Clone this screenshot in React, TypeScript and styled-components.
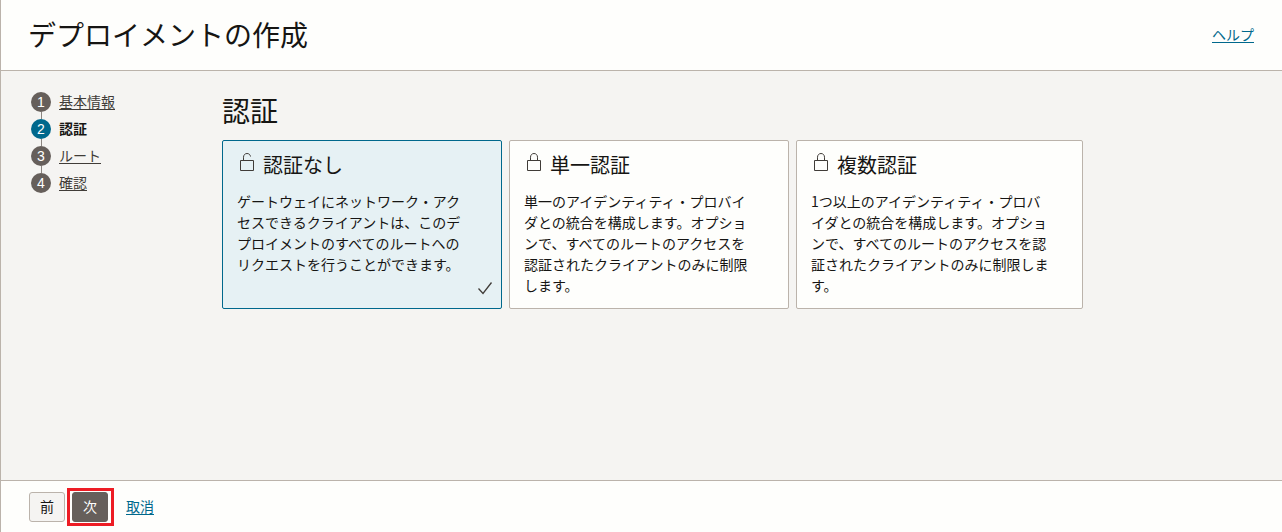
import React, { useState } from "react";
import styled, { createGlobalStyle } from "styled-components";

const GlobalStyle = createGlobalStyle`
  *, *::before, *::after { box-sizing: border-box; }
  body {
    margin: 0;
    background: #f5f4f2;
    color: #161513;
    font-family: "Noto Sans CJK JP", "Noto Sans", sans-serif;
    font-size: 14px;
    line-height: 21px;
  }
`;

const Page = styled.div`
  display: flex;
  flex-direction: column;
  min-height: 100vh;
  border-left: 1px solid #bbb3ab;
`;

const Header = styled.header`
  display: flex;
  align-items: center;
  justify-content: space-between;
  padding: 13px 28px 15px 27px;
  background: #fefefc;
  border-bottom: 1px solid #bbb3ab;
`;

const PageTitle = styled.h1`
  margin: 0;
  font-size: 28px;
  font-weight: 400;
  line-height: 42px;
`;

const Link = styled.a`
  color: #00688c;
  text-decoration: underline;
  text-underline-offset: 2px;
`;

const Body = styled.div`
  display: flex;
  flex: 1;
  padding: 18px 28px;
`;

const Steps = styled.ol`
  flex: 0 0 193px;
  margin: 0;
  padding: 3px 2px;
  list-style: none;
`;

const Step = styled.li`
  display: flex;
  align-items: flex-start;
  gap: 8px;
  height: 27px;
`;

const Marker = styled.span<{ $current: boolean }>`
  display: flex;
  flex-direction: column;
  align-items: center;
  height: 27px;

  b {
    width: 20px;
    height: 20px;
    border-radius: 50%;
    background: ${(p) => (p.$current ? "#00688c" : "#665f5b")};
    color: #fff;
    font-family: "Liberation Sans", sans-serif;
    font-size: 14px;
    font-weight: 400;
    line-height: 20px;
    text-align: center;
  }

  &::after {
    content: "";
    flex: 1;
    width: 1px;
    background: #8b8580;
  }

  ${Step}:last-child &::after {
    display: none;
  }
`;

const StepLink = styled.a`
  color: #403c38;
  line-height: 18px;
  text-decoration: underline;
  text-underline-offset: 2px;
`;

const StepCurrent = styled.strong`
  font-weight: 700;
  line-height: 18px;
`;

const Content = styled.main`
  flex: 1;
  min-width: 0;
`;

const SectionTitle = styled.h2`
  margin: 0 0 9px;
  font-size: 28px;
  font-weight: 400;
  line-height: 42px;
`;

const Cards = styled.div`
  display: grid;
  grid-template-columns: 280fr 280fr 287fr;
  gap: 7px;
  max-width: 861px;
`;

const Card = styled.label<{ $selected: boolean }>`
  display: flex;
  flex-direction: column;
  position: relative;
  min-height: 169px;
  padding: 10px 32px 11px 14px;
  border: 1px solid ${(p) => (p.$selected ? "#00688c" : "#bbb3ab")};
  border-radius: 2px;
  background: ${(p) => (p.$selected ? "#e6f1f4" : "#fefefc")};
  cursor: pointer;
`;

const CardRadio = styled.input`
  position: absolute;
  width: 1px;
  height: 1px;
  margin: 0;
  opacity: 0;
`;

const CardHead = styled.span`
  display: flex;
  align-items: flex-start;
  gap: 7px;
  padding-left: 1px;
  font-size: 20px;
  line-height: 28px;
`;

const CardText = styled.span`
  margin-top: 12px;
`;

const LockIcon = styled.svg`
  width: 18px;
  height: 22px;
  fill: none;
  stroke: #403c38;
`;

const CheckIcon = styled.svg`
  position: absolute;
  right: 8px;
  bottom: 13px;
  width: 16px;
  height: 14px;
  fill: none;
  stroke: #403c38;
  stroke-width: 1.3;
`;

const Footer = styled.footer`
  display: flex;
  align-items: center;
  gap: 7px;
  padding: 11px 28px 10px;
  background: #fefefc;
  border-top: 1px solid #bbb3ab;

  ${Link} {
    padding-bottom: 2px;
  }
`;

const Button = styled.button<{ $primary?: boolean }>`
  width: 36px;
  height: 30px;
  padding: 0 0 2px;
  border: 1px solid ${(p) => (p.$primary ? "#665f5b" : "#bbb3ab")};
  border-radius: 3px;
  background: ${(p) => (p.$primary ? "#665f5b" : "#f5f4f2")};
  color: ${(p) => (p.$primary ? "#fff" : "#161513")};
  font: inherit;
  cursor: pointer;
`;

const Highlight = styled.span`
  display: flex;
  position: relative;
  margin-right: 11px;

  &::after {
    content: "";
    position: absolute;
    inset: -4px -6px -4px -5px;
    border: 3px solid #ed1c24;
    pointer-events: none;
  }
`;

const steps = ["基本情報", "認証", "ルート", "確認"];
const currentStep = 1;

const options = [
  {
    title: "認証なし",
    open: true,
    text: "ゲートウェイにネットワーク・アクセスできるクライアントは、このデプロイメントのすべてのルートへのリクエストを行うことができます。",
  },
  {
    title: "単一認証",
    open: false,
    text: "単一のアイデンティティ・プロバイダとの統合を構成します。オプションで、すべてのルートのアクセスを認証されたクライアントのみに制限します。",
  },
  {
    title: "複数認証",
    open: false,
    text: "1つ以上のアイデンティティ・プロバイダとの統合を構成します。オプションで、すべてのルートのアクセスを認証されたクライアントのみに制限します。",
  },
];

function Lock({ open }: { open: boolean }) {
  return (
    <LockIcon viewBox="0 0 18 22" aria-hidden="true">
      <path d="M2.5 9.5h13v10h-13z" />
      <path
        d={
          open
            ? "M5.5 9.5V6.2C5.5 4 7 2.5 9 2.5s3.2 1.2 3.5 3"
            : "M5.5 9.5V6.2C5.5 4 7 2.5 9 2.5s3.5 1.5 3.5 3.7v3.3"
        }
      />
    </LockIcon>
  );
}

export default function App() {
  const [selected, setSelected] = useState(0);
  return (
    <>
      <GlobalStyle />
      <Page lang="ja">
        <Header>
          <PageTitle>デプロイメントの作成</PageTitle>
          <Link href="#help">ヘルプ</Link>
        </Header>
        <Body>
          <Steps>
            {steps.map((name, i) => (
              <Step key={name}>
                <Marker $current={i === currentStep}>
                  <b>{i + 1}</b>
                </Marker>
                {i === currentStep ? (
                  <StepCurrent aria-current="step">{name}</StepCurrent>
                ) : (
                  <StepLink href={`#step-${i + 1}`}>{name}</StepLink>
                )}
              </Step>
            ))}
          </Steps>
          <Content>
            <SectionTitle>認証</SectionTitle>
            <Cards role="radiogroup" aria-label="認証">
              {options.map((option, i) => (
                <Card key={option.title} $selected={i === selected}>
                  <CardRadio
                    type="radio"
                    name="auth"
                    checked={i === selected}
                    onChange={() => setSelected(i)}
                  />
                  <CardHead>
                    <Lock open={option.open} />
                    {option.title}
                  </CardHead>
                  <CardText>{option.text}</CardText>
                  {i === selected && (
                    <CheckIcon viewBox="0 0 16 14" aria-hidden="true">
                      <path d="M1.5 7.5L6 12.5L14.5 1.5" />
                    </CheckIcon>
                  )}
                </Card>
              ))}
            </Cards>
          </Content>
        </Body>
        <Footer>
          <Button type="button">前</Button>
          <Highlight>
            <Button type="button" $primary>
              次
            </Button>
          </Highlight>
          <Link href="#cancel">取消</Link>
        </Footer>
      </Page>
    </>
  );
}
